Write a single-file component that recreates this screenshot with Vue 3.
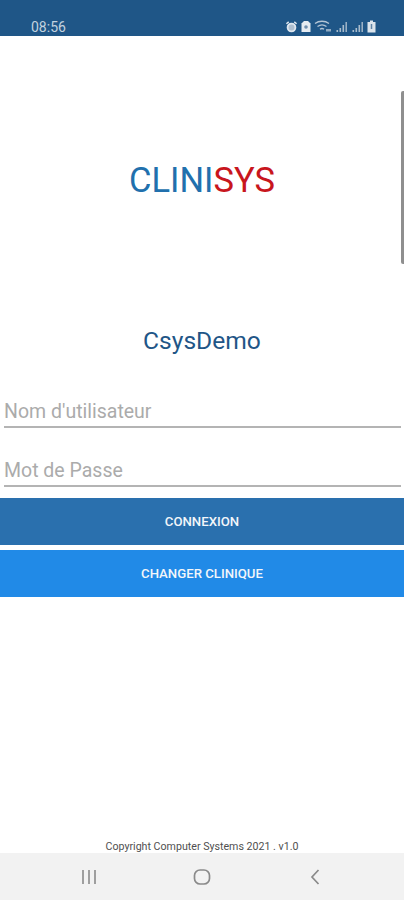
<script setup>
const fields = ["Nom d'utilisateur", 'Mot de Passe'];
</script>

<template>
  <div class="screen">
    <div class="status-bar">
      <span class="time">08:56</span>
      <div class="status-icons">
        <svg width="13" height="14" viewBox="0 0 14 14">
          <circle cx="7" cy="7.5" r="4.2" fill="#aebfd0" stroke="#dfe7ef" stroke-width="2" />
          <path d="M1.5 3.5L4 1.5M12.5 3.5L10 1.5" stroke="#dfe7ef" stroke-width="1.6" />
        </svg>
        <svg width="10" height="13" viewBox="0 0 10 13">
          <path d="M3 1h4l2.5 2.5V12H.5V3.5z" fill="#e6ecf2" />
          <circle cx="5" cy="7" r="1.8" fill="#6f8fae" />
        </svg>
        <svg width="18" height="13" viewBox="0 0 18 13">
          <path d="M1 3.5C5 .5 11 .5 15 3.5M3.5 6.5C6.5 4.3 9.5 4.3 12.5 6.5M6 9.3C7.3 8.3 8.7 8.3 10 9.3" fill="none" stroke="#b4c5d5" stroke-width="1.3" />
          <rect x="12" y="9" width="5" height="2.5" fill="#8fa9c1" />
        </svg>
        <svg width="13" height="12" viewBox="0 0 12 12">
          <path d="M1 9h1.6v2H1zM4 7h1.6v4H4zM7 4h1.6v7H7zM10 1h1.4v10H10z" fill="#a9bccd" />
        </svg>
        <svg width="13" height="12" viewBox="0 0 12 12">
          <path d="M1 9h1.6v2H1zM4 7h1.6v4H4zM7 4h1.6v7H7zM10 1h1.4v10H10z" fill="#a9bccd" />
        </svg>
        <svg width="9" height="13" viewBox="0 0 9 13">
          <path d="M3 .5h3V2h2.5v10.5H.5V2H3z" fill="#dbe4ec" />
          <path d="M4.5 4v5" stroke="#5f84a6" stroke-width="1.5" />
        </svg>
      </div>
    </div>

    <main class="content">
      <div class="scrollbar"></div>
      <div class="logo"><span class="logo-blue">CLINI</span><span class="logo-red">SYS</span></div>
      <h1 class="clinic">CsysDemo</h1>

      <form class="login" @submit.prevent>
        <label v-for="field in fields" :key="field" class="field">
          <input type="text" :placeholder="field" />
        </label>
        <button class="btn btn-login" type="submit">CONNEXION</button>
        <button class="btn btn-change" type="button">CHANGER CLINIQUE</button>
      </form>

      <p class="copyright">Copyright Computer Systems 2021 . v1.0</p>
    </main>

    <nav class="nav-bar">
      <svg width="16" height="16" viewBox="0 0 16 16">
        <path d="M2 1v14M8 1v14M14 1v14" stroke="#8a8a8a" stroke-width="1.6" fill="none" />
      </svg>
      <svg width="18" height="18" viewBox="0 0 18 18">
        <rect x="1.5" y="2" width="15" height="14" rx="5.5" fill="none" stroke="#8a8a8a" stroke-width="1.7" />
      </svg>
      <svg width="12" height="18" viewBox="0 0 12 18">
        <path d="M9.5 2L3 9l6.5 7" stroke="#8a8a8a" stroke-width="1.7" fill="none" />
      </svg>
    </nav>
  </div>
</template>

<style scoped>
.screen {
  width: 404px;
  height: 900px;
  display: flex;
  flex-direction: column;
  background: #fff;
  font-family: Roboto, "Liberation Sans", sans-serif;
  overflow: hidden;
}

.status-bar {
  height: 36px;
  flex: none;
  box-sizing: border-box;
  padding: 17px 28px 0 31px;
  display: flex;
  align-items: center;
  justify-content: space-between;
  background: #1f5687;
  color: #c3d2df;
}

.time {
  font-size: 14px;
}

.status-icons {
  display: flex;
  align-items: center;
  gap: 3px;
}

.content {
  flex: 1;
  position: relative;
  display: flex;
  flex-direction: column;
}

.scrollbar {
  position: absolute;
  top: 55px;
  right: 0;
  width: 3px;
  height: 173px;
  background: #8f8f8f;
  border-radius: 2px 0 0 2px;
}

.logo {
  margin-top: 123px;
  text-align: center;
  font-size: 34.5px;
  line-height: 43px;
}

.logo-blue {
  color: #2170ad;
}

.logo-red {
  color: #c8161d;
}

.clinic {
  margin: 124px 0 0;
  text-align: center;
  font-size: 24.6px;
  line-height: 29px;
  font-weight: 400;
  color: #1f5687;
}

.login {
  margin-top: 14px;
  display: flex;
  flex-direction: column;
}

.field {
  height: 59px;
  box-sizing: border-box;
  padding: 0 3px 0 4px;
  display: flex;
  align-items: flex-end;
}

.field input {
  width: 100%;
  height: 32px;
  box-sizing: border-box;
  padding: 0;
  border: none;
  border-bottom: 2px solid #b4b4b4;
  outline: none;
  background: transparent;
  font-family: inherit;
  font-size: 19.5px;
}

.field input::placeholder {
  color: #ababab;
  opacity: 1;
}

.btn {
  height: 47px;
  border: none;
  color: #f2f6fa;
  font-family: inherit;
  font-size: 13.2px;
  font-weight: 500;
}

.btn-login {
  margin-top: 11px;
  background: #2a70ae;
}

.btn-change {
  margin-top: 5px;
  background: #218ae7;
}

.copyright {
  margin: auto 0 -1px;
  height: 15px;
  text-align: center;
  font-size: 10.65px;
  line-height: 15px;
  color: #4f4f4f;
}

.nav-bar {
  height: 47px;
  flex: none;
  display: grid;
  grid-template-columns: 178px 48px 178px;
  align-items: center;
  justify-items: center;
  background: #f2f2f2;
}
</style>

<style>
body {
  background: #fff;
}
</style>
